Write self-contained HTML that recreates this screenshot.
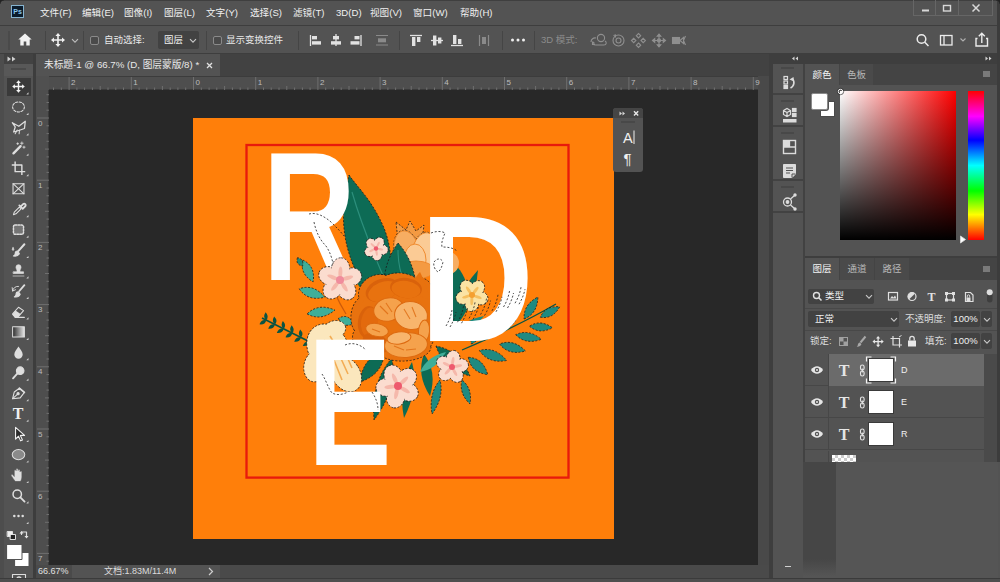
<!DOCTYPE html>
<html lang="zh-CN">
<head>
<meta charset="utf-8">
<title>Photoshop</title>
<style>
*{box-sizing:border-box;margin:0;padding:0}
html,body{width:1000px;height:582px;overflow:hidden;background:#535353}
body{position:relative;font-family:"Liberation Sans","Noto Sans CJK SC",sans-serif;font-size:10px;color:#e6e6e6}
.abs{position:absolute}
svg{overflow:visible}
.t10{font-size:9.5px;line-height:16px;white-space:nowrap;color:#e8e8e8}
.t9{font-size:9px;line-height:13px;white-space:nowrap}
#menubar{left:0;top:0;width:1000px;height:26px;background:#535353;border-bottom:1px solid #3e3e3e;border-top:1px solid #3f3f3f}
#menubar span{position:absolute;top:3.500px;line-height:16px;font-size:9.6px;color:#f0f0f0;white-space:nowrap}
#pslogo{left:11px;top:4px;width:13px;height:13px;background:#0b1c2c;border:1px solid #86b4d0;color:#8cc8f0;font-size:7px;line-height:11px;text-align:center;font-weight:bold}
#winctl{left:913px;top:-1px;width:80px;height:16px;border:1px solid #666;border-top:none}
#winctl i{position:absolute;top:0;width:1px;height:15px;background:#666}
#optbar{left:0;top:26px;width:1000px;height:28px;background:#535353;border-bottom:1px solid #3e3e3e}
.vsep{position:absolute;width:1px;background:#454545;top:31px;height:19px}
.chk{width:9px;height:9px;border:1px solid #8a8a8a;border-radius:2px;background:#4a4a4a}
.dd{background:#424242;border-radius:2px;color:#f0f0f0;font-size:9.5px;line-height:18px}
#tabbar{left:0;top:54px;width:769px;height:22px;background:#424242}
#doctab{left:36px;top:54px;width:184px;height:22px;background:#535353;color:#e8e8e8;font-size:9.7px;line-height:22px;padding-left:8px;white-space:nowrap}
#tools{left:0;top:54px;width:36px;height:528px;background:#535353;border-right:3px solid #3d3d3d;border-left:4px solid #4d4d4d}
#hruler{left:36px;top:76px;width:722px;height:14px;background:#4e4e4e;border-top:1px solid #3c3c3c;border-bottom:1px solid #3a3a3a}
#vruler{left:36px;top:90px;width:13px;height:475px;background:#4e4e4e;border-right:1px solid #3a3a3a}
#canvasbg{left:49px;top:90px;width:709px;height:475px;background:#282828}
#status{left:36px;top:565px;width:733px;height:13px;background:#4a4a4a}
#vscroll{left:758px;top:76px;width:11px;height:489px;background:#494949}
#bottomline{left:0;top:578px;width:1000px;height:4px;background:#4e4e4e;border-top:1.500px solid #3b3b3b}
#rightdock{left:769px;top:54px;width:231px;height:524px;background:#535353;border-left:4px solid #3e3e3e}
.ptab{font-size:9.5px;line-height:21px;text-align:center;color:#b8b8b8;background:#4a4a4a;white-space:nowrap}
.ptab.act{background:#535353;color:#f4f4f4}
</style>
</head>
<body>
<div id="menubar" class="abs"><div class="abs" id="pslogo">Ps</div><span id="m0" style="left:40px">文件(F)</span><span id="m1" style="left:82px">编辑(E)</span><span id="m2" style="left:124px">图像(I)</span><span id="m3" style="left:164px">图层(L)</span><span id="m4" style="left:206px">文字(Y)</span><span id="m5" style="left:250px">选择(S)</span><span id="m6" style="left:293px">滤镜(T)</span><span id="m7" style="left:336px">3D(D)</span><span id="m8" style="left:370px">视图(V)</span><span id="m9" style="left:413px">窗口(W)</span><span id="m10" style="left:460px">帮助(H)</span><div class="abs" id="winctl"><i style="left:21px"></i><i style="left:44px"></i><svg class="abs" style="left:0;top:0" width="80" height="16" viewBox="0 0 80 16"><path d="M8 10.5h7" stroke="#d8d8d8" stroke-width="2"/><rect x="29.5" y="5.5" width="7" height="5.5" fill="none" stroke="#d8d8d8" stroke-width="1.4"/><path d="M58.5 4.5l7 7m0-7l-7 7" stroke="#d8d8d8" stroke-width="1.5"/></svg></div></div><div id="optbar" class="abs"></div><div class="vsep" style="left:45px"></div><div class="vsep" style="left:83px"></div><div class="vsep" style="left:206px"></div><div class="vsep" style="left:298px"></div><div class="vsep" style="left:399px"></div><div class="vsep" style="left:502px"></div><div class="vsep" style="left:534px"></div><div class="abs" style="left:8px;top:31px;width:2px;height:19px;background:#4a4a4a"></div><svg class="abs" style="left:18px;top:33px" width="14" height="13" viewBox="0 0 14 13"><path d="M7 0.5L0.3 6.6h2v5.9h3.4V8.6h2.6v3.9h3.4V6.6h2z" fill="#f2f2f2"/></svg><svg class="abs" style="left:51px;top:33px" width="14" height="14" viewBox="0 0 14 14"><path d="M7 0l2.600 3h-1.800v3.200h3.200v-1.800l3 2.600l-3 2.600v-1.800h-3.200v3.200h1.800l-2.600 3l-2.600 -3h1.800v-3.200h-3.200v1.800l-3 -2.600l3 -2.600v1.800h3.200v-3.200h-1.800z" fill="#f0f0f0"/></svg><svg class="abs" style="left:71px;top:38px" width="8" height="6" viewBox="0 0 8 6"><path d="M1 1.200l3 3l3 -3" fill="none" stroke="#bdbdbd" stroke-width="1.100"/></svg><div class="abs chk" style="left:90px;top:36px"></div><div class="abs t10" id="o_auto" style="left:104px;top:32px">自动选择:</div><div class="abs dd" id="o_dd" style="left:158px;top:31px;width:41px;height:18px"><span style="position:absolute;left:6px;top:0">图层</span></div><svg class="abs" style="left:189px;top:38px" width="8" height="6" viewBox="0 0 8 6"><path d="M1 1.200l3 3l3 -3" fill="none" stroke="#c8c8c8" stroke-width="1.100"/></svg><div class="abs chk" style="left:213px;top:36px"></div><div class="abs t10" id="o_show" style="left:226px;top:32px">显示变换控件</div><svg class="abs" style="left:300px;top:30px" width="200" height="22" viewBox="300 30 200 22"><path d="M310.5 35v11" stroke="#e2e2e2" stroke-width="1.3"/><rect x="312" y="36" width="5" height="3.4" fill="#e2e2e2"/><rect x="312" y="41.2" width="9" height="3.4" fill="#e2e2e2"/><path d="M336 34v12" stroke="#e2e2e2" stroke-width="1.3"/><rect x="333" y="36" width="6" height="3.4" fill="#e2e2e2"/><rect x="331" y="41.2" width="10" height="3.4" fill="#e2e2e2"/><path d="M361 35v11" stroke="#e2e2e2" stroke-width="1.3"/><rect x="354.5" y="36" width="5" height="3.4" fill="#e2e2e2"/><rect x="350.5" y="41.2" width="9" height="3.4" fill="#e2e2e2"/><path d="M376 35.5h12M376 45h12" stroke="#8a8a8a" stroke-width="1.2"/><rect x="378" y="38.3" width="8" height="4" fill="#8a8a8a"/><path d="M410 35.5h12" stroke="#e2e2e2" stroke-width="1.3"/><rect x="412" y="37" width="3.4" height="9" fill="#e2e2e2"/><rect x="417" y="37" width="3.4" height="5" fill="#e2e2e2"/><path d="M431 40.5h12" stroke="#e2e2e2" stroke-width="1.3"/><rect x="433" y="35.5" width="3.4" height="10" fill="#e2e2e2"/><rect x="438" y="37.5" width="3.4" height="6" fill="#e2e2e2"/><path d="M451 45.5h12" stroke="#e2e2e2" stroke-width="1.3"/><rect x="453" y="35" width="3.4" height="9" fill="#e2e2e2"/><rect x="458" y="39" width="3.4" height="5" fill="#e2e2e2"/><path d="M479.5 35v11M488.5 35v11" stroke="#8a8a8a" stroke-width="1.2"/><rect x="482" y="37" width="4" height="7" fill="#8a8a8a"/></svg><svg class="abs" style="left:510px;top:37px" width="16" height="6" viewBox="0 0 16 6"><circle cx="2.5" cy="3" r="1.5" fill="#efefef"/><circle cx="8" cy="3" r="1.5" fill="#efefef"/><circle cx="13.5" cy="3" r="1.5" fill="#efefef"/></svg><div class="abs t10" id="o_3d" style="left:541px;top:32px;color:#8c8c8c">3D 模式:</div><svg class="abs" style="left:588px;top:30px" width="104" height="22" viewBox="588 30 104 22" fill="none" stroke="#8f8f8f" stroke-width="1.1"><circle cx="601" cy="38" r="3.6"/><path d="M591 42c0-3 2.5-4.5 5-4M605 41c2 1 1.5 4-1 4h-8c-3 0-4-1.5-3-3l1.5 1.5M592.500 41.5v3h2.500"/><circle cx="618.5" cy="40.500" r="5.500"/><circle cx="618.5" cy="40.500" r="2.500"/><path d="M613.500 35.500l2 -0.500v2.500"/><path d="M638.500 33.500l2.200 2.200l-2.200 2.200l-2.200 -2.200zM638.500 43l2.200 2.200l-2.200 2.200l-2.200 -2.200zM631.500 40.500l2.200 -2.200l2.200 2.200l-2.200 2.200zM641 40.500l2.200 -2.200l2.200 2.200l-2.200 2.200z"/><path d="M659 34l1.800 2.200h-3.600zM659 47l1.800 -2.200h-3.600zM652.500 40.500l2.200 -1.800v3.600zM665.500 40.500l-2.200 -1.800v3.600z" fill="#8f8f8f"/><path d="M659 36v9M654.500 40.500h9"/><circle cx="659" cy="40.500" r="1.600" fill="#8f8f8f"/><rect x="672.500" y="37.500" width="7" height="6" fill="#8f8f8f"/><path d="M680 40.500l3.500 -3v6zM685.500 36l-2 4.500l2 4.500"/></svg><svg class="abs" style="left:912px;top:30px" width="84" height="22" viewBox="912 30 84 22" fill="none" stroke="#ececec" stroke-width="1.5"><circle cx="921.500" cy="39" r="4.300"/><path d="M924.800 42.300l3.700 3.700"/><rect x="940.500" y="35.500" width="11.500" height="9.500" stroke-width="1.300"/><path d="M944 35.500v9.500" stroke-width="1.300"/><path d="M960.500 38.500l2.500 2.500l2.500 -2.500" stroke="#b0b0b0" stroke-width="1.100"/><path d="M977.500 38.500h-1.500v7.500h11.500v-7.500h-1.500M981.800 43v-9.500M978.800 36.300l3 -3l3 3" stroke-width="1.400"/></svg><div id="tabbar" class="abs"></div><div id="doctab" class="abs"><span id="dt_text">未标题-1 @ 66.7% (D, 图层蒙版/8) *</span><svg style="position:absolute;left:170px;top:8px" width="7" height="7" viewBox="0 0 7 7"><path d="M1 1l5 5m0 -5l-5 5" stroke="#e0e0e0" stroke-width="1.300"/></svg></div><div id="canvasbg" class="abs"></div><div id="vscroll" class="abs"></div><div id="hruler" class="abs"></div><div id="vruler" class="abs"></div><div class="abs" style="left:36px;top:76px;width:13px;height:14px;background:#505050"></div><svg class="abs" style="left:36px;top:76px" width="723" height="14" viewBox="36 76 723 14"><path d="M53.5 87.5v2.5M61.3 87.5v2.5M69.1 77v13M76.9 87.5v2.5M84.6 87.5v2.5M92.4 87.5v2.5M100.2 86v4M108.0 87.5v2.5M115.8 87.5v2.5M123.5 87.5v2.5M131.3 77v13M139.1 87.5v2.5M146.8 87.5v2.5M154.6 87.5v2.5M162.4 86v4M170.2 87.5v2.5M177.9 87.5v2.5M185.7 87.5v2.5M193.5 77v13M201.3 87.5v2.5M209.1 87.5v2.5M216.8 87.5v2.5M224.6 86v4M232.4 87.5v2.5M240.2 87.5v2.5M247.9 87.5v2.5M255.7 77v13M263.5 87.5v2.5M271.2 87.5v2.5M279.0 87.5v2.5M286.8 86v4M294.6 87.5v2.5M302.4 87.5v2.5M310.1 87.5v2.5M317.9 77v13M325.7 87.5v2.5M333.5 87.5v2.5M341.2 87.5v2.5M349.0 86v4M356.8 87.5v2.5M364.6 87.5v2.5M372.3 87.5v2.5M380.1 77v13M387.9 87.5v2.5M395.6 87.5v2.5M403.4 87.5v2.5M411.2 86v4M419.0 87.5v2.5M426.8 87.5v2.5M434.5 87.5v2.5M442.3 77v13M450.1 87.5v2.5M457.9 87.5v2.5M465.6 87.5v2.5M473.4 86v4M481.2 87.5v2.5M488.9 87.5v2.5M496.7 87.5v2.5M504.5 77v13M512.3 87.5v2.5M520.0 87.5v2.5M527.8 87.5v2.5M535.6 86v4M543.4 87.5v2.5M551.2 87.5v2.5M558.9 87.5v2.5M566.7 77v13M574.5 87.5v2.5M582.2 87.5v2.5M590.0 87.5v2.5M597.8 86v4M605.6 87.5v2.5M613.4 87.5v2.5M621.1 87.5v2.5M628.9 77v13M636.7 87.5v2.5M644.5 87.5v2.5M652.2 87.5v2.5M660.0 86v4M667.8 87.5v2.5M675.5 87.5v2.5M683.3 87.5v2.5M691.1 77v13M698.9 87.5v2.5M706.6 87.5v2.5M714.4 87.5v2.5M722.2 86v4M730.0 87.5v2.5M737.8 87.5v2.5M745.5 87.5v2.5M753.3 77v13" stroke="#6f6f6f" stroke-width="1" fill="none"/><text x="71.1" y="84.500" font-size="8" fill="#bdbdbd" font-family="Liberation Sans, sans-serif">2</text><text x="133.3" y="84.500" font-size="8" fill="#bdbdbd" font-family="Liberation Sans, sans-serif">1</text><text x="195.5" y="84.500" font-size="8" fill="#bdbdbd" font-family="Liberation Sans, sans-serif">0</text><text x="257.7" y="84.500" font-size="8" fill="#bdbdbd" font-family="Liberation Sans, sans-serif">1</text><text x="319.9" y="84.500" font-size="8" fill="#bdbdbd" font-family="Liberation Sans, sans-serif">2</text><text x="382.1" y="84.500" font-size="8" fill="#bdbdbd" font-family="Liberation Sans, sans-serif">3</text><text x="444.3" y="84.500" font-size="8" fill="#bdbdbd" font-family="Liberation Sans, sans-serif">4</text><text x="506.5" y="84.500" font-size="8" fill="#bdbdbd" font-family="Liberation Sans, sans-serif">5</text><text x="568.7" y="84.500" font-size="8" fill="#bdbdbd" font-family="Liberation Sans, sans-serif">6</text><text x="630.9" y="84.500" font-size="8" fill="#bdbdbd" font-family="Liberation Sans, sans-serif">7</text><text x="693.1" y="84.500" font-size="8" fill="#bdbdbd" font-family="Liberation Sans, sans-serif">8</text><text x="755.3" y="84.500" font-size="8" fill="#bdbdbd" font-family="Liberation Sans, sans-serif">9</text></svg><svg class="abs" style="left:36px;top:90px" width="13" height="475" viewBox="36 90 13 475"><path d="M46.5 94.7h2.5M46.5 102.5h2.5M46.5 110.2h2.5M37 118.0h12M46.5 125.8h2.5M46.5 133.6h2.5M46.5 141.3h2.5M45 149.1h4M46.5 156.9h2.5M46.5 164.7h2.5M46.5 172.4h2.5M37 180.2h12M46.5 188.0h2.5M46.5 195.8h2.5M46.5 203.5h2.5M45 211.3h4M46.5 219.1h2.5M46.5 226.9h2.5M46.5 234.6h2.5M37 242.4h12M46.5 250.2h2.5M46.5 258.0h2.5M46.5 265.7h2.5M45 273.5h4M46.5 281.3h2.5M46.5 289.1h2.5M46.5 296.8h2.5M37 304.6h12M46.5 312.4h2.5M46.5 320.1h2.5M46.5 327.9h2.5M45 335.7h4M46.5 343.5h2.5M46.5 351.2h2.5M46.5 359.0h2.5M37 366.8h12M46.5 374.6h2.5M46.5 382.4h2.5M46.5 390.1h2.5M45 397.9h4M46.5 405.7h2.5M46.5 413.4h2.5M46.5 421.2h2.5M37 429.0h12M46.5 436.8h2.5M46.5 444.6h2.5M46.5 452.3h2.5M45 460.1h4M46.5 467.9h2.5M46.5 475.7h2.5M46.5 483.4h2.5M37 491.2h12M46.5 499.0h2.5M46.5 506.8h2.5M46.5 514.5h2.5M45 522.3h4M46.5 530.1h2.5M46.5 537.9h2.5M46.5 545.6h2.5M37 553.4h12M46.5 561.2h2.5" stroke="#6f6f6f" stroke-width="1" fill="none"/><text x="38" y="125.5" font-size="8" fill="#bdbdbd" font-family="Liberation Sans, sans-serif">0</text><text x="38" y="187.7" font-size="8" fill="#bdbdbd" font-family="Liberation Sans, sans-serif">1</text><text x="38" y="249.9" font-size="8" fill="#bdbdbd" font-family="Liberation Sans, sans-serif">2</text><text x="38" y="312.1" font-size="8" fill="#bdbdbd" font-family="Liberation Sans, sans-serif">3</text><text x="38" y="374.3" font-size="8" fill="#bdbdbd" font-family="Liberation Sans, sans-serif">4</text><text x="38" y="436.5" font-size="8" fill="#bdbdbd" font-family="Liberation Sans, sans-serif">5</text><text x="38" y="498.7" font-size="8" fill="#bdbdbd" font-family="Liberation Sans, sans-serif">6</text><text x="38" y="560.9" font-size="8" fill="#bdbdbd" font-family="Liberation Sans, sans-serif">7</text></svg><div id="status" class="abs"></div><div class="abs" style="left:72px;top:565px;width:148px;height:13px;background:#535353"></div><div class="abs t9" id="st_zoom" style="left:38px;top:565px;color:#e0e0e0">66.67%</div><div class="abs t9" id="st_doc" style="left:104px;top:565px;color:#dcdcdc">文档:1.83M/11.4M</div><svg class="abs" style="left:208px;top:567px" width="6" height="9" viewBox="0 0 6 9"><path d="M1 1l3.500 3.500l-3.500 3.500" fill="none" stroke="#cfcfcf" stroke-width="1.200"/></svg><div id="tools" class="abs"><div class="abs" style="left:0;top:0;width:29px;height:10px;background:#424242"></div><svg class="abs" style="left:3px;top:2px" width="10" height="6" viewBox="0 0 10 6"><path d="M0.500 0.500l3.500 2.500l-3.500 2.500zM5 0.500l3.500 2.500l-3.500 2.500z" fill="#d0d0d0"/></svg><div class="abs" style="left:0px;top:10px;width:29px;height:12px;background:#585858"></div><div class="abs" style="left:7px;top:14px;width:15px;height:2px;background:#4a4a4a"></div><div class="abs" style="left:3px;top:23.500px;width:23.500px;height:18.500px;background:#3a3a3a"></div></div><svg class="abs" style="left:0;top:76px" width="36" height="506" viewBox="0 76 36 506" fill="none" stroke="#dedede" stroke-width="1.300" stroke-linecap="round" stroke-linejoin="round"><path d="M26.3 94.5h2.200v-2.200z" fill="#cfcfcf" stroke="none"/><path d="M26.3 115.0h2.200v-2.200z" fill="#cfcfcf" stroke="none"/><path d="M26.3 135.4h2.200v-2.200z" fill="#cfcfcf" stroke="none"/><path d="M26.3 155.8h2.200v-2.200z" fill="#cfcfcf" stroke="none"/><path d="M26.3 176.3h2.200v-2.200z" fill="#cfcfcf" stroke="none"/><path d="M26.3 217.2h2.200v-2.200z" fill="#cfcfcf" stroke="none"/><path d="M26.3 237.7h2.200v-2.200z" fill="#cfcfcf" stroke="none"/><path d="M26.3 258.1h2.200v-2.200z" fill="#cfcfcf" stroke="none"/><path d="M26.3 278.5h2.200v-2.200z" fill="#cfcfcf" stroke="none"/><path d="M26.3 299.0h2.200v-2.200z" fill="#cfcfcf" stroke="none"/><path d="M26.3 319.4h2.200v-2.200z" fill="#cfcfcf" stroke="none"/><path d="M26.3 339.9h2.200v-2.200z" fill="#cfcfcf" stroke="none"/><path d="M26.3 360.3h2.200v-2.200z" fill="#cfcfcf" stroke="none"/><path d="M26.3 380.8h2.200v-2.200z" fill="#cfcfcf" stroke="none"/><path d="M26.3 401.2h2.200v-2.200z" fill="#cfcfcf" stroke="none"/><path d="M26.3 421.7h2.200v-2.200z" fill="#cfcfcf" stroke="none"/><path d="M26.3 442.1h2.200v-2.200z" fill="#cfcfcf" stroke="none"/><path d="M26.3 462.6h2.200v-2.200z" fill="#cfcfcf" stroke="none"/><path d="M26.3 483.1h2.200v-2.200z" fill="#cfcfcf" stroke="none"/><path d="M26.3 503.5h2.200v-2.200z" fill="#cfcfcf" stroke="none"/><path d="M26.3 524.0h2.200v-2.200z" fill="#cfcfcf" stroke="none"/><g transform="translate(18.5 86.50) scale(0.84) translate(-18.5 -86.50)"><g transform="translate(11.0 79.0) scale(1.07)"><path d="M7 0l2.600 3h-1.800v3.200h3.200v-1.800l3 2.600l-3 2.600v-1.800h-3.200v3.200h1.800l-2.600 3l-2.600 -3h1.800v-3.200h-3.200v1.800l-3 -2.600l3 -2.600v1.800h3.200v-3.200h-1.800z" fill="#f4f4f4" stroke="none"/></g></g><g transform="translate(18.5 106.95) scale(0.84) translate(-18.5 -106.95)"><ellipse cx="18.5" cy="106.95" rx="7" ry="6" stroke-dasharray="2.600 1.800"/></g><g transform="translate(18.5 127.40) scale(0.84) translate(-18.5 -127.40)"><path d="M11.1 121.80000000000001L18.9 126.10000000000001L26.6 120.10000000000001L25.6 128.70000000000002L20.5 130.5L12.8 132.9L14.6 126.9Z" stroke-width="1.500"/><path d="M17.0 130.4l-2.500 4.500M19.7 130.6l-0.500 4.500" stroke-width="1.200"/></g><g transform="translate(18.5 147.85) scale(0.84) translate(-18.5 -147.85)"><path d="M12.5 154.35l8.500 -8.500" stroke-width="2.800"/><path d="M22.5 140.85v3M21.0 142.35h3M25.0 145.85v2.500M23.7 147.04999999999998h2.600M17.5 141.85v2M16.5 142.85h2" stroke-width="1"/></g><g transform="translate(18.5 168.30) scale(0.84) translate(-18.5 -168.30)"><path d="M14.5 160.3v12h12M10.5 164.3h12v12" stroke-width="1.700" stroke-linecap="butt"/></g><g transform="translate(18.5 188.75) scale(0.84) translate(-18.5 -188.75)"><rect x="12.0" y="182.75" width="13" height="12"/><path d="M12.0 182.75l13 12M25.0 182.75l-13 12"/></g><g transform="translate(18.5 209.20) scale(0.84) translate(-18.5 -209.20)"><path d="M12.5 215.7l1 -3l6 -6l2 2l-6 6z"/><path d="M19.5 204.7l3.500 3.500M21.0 206.2l3 -3a1.600 1.600 0 0 1 2.500 2.500l-3 3" stroke-width="2.200"/></g><g transform="translate(18.5 229.65) scale(0.84) translate(-18.5 -229.65)"><rect x="12.5" y="224.15" width="12" height="11" rx="2" fill="#747474" stroke-dasharray="2 1.500" stroke-width="1.800"/></g><g transform="translate(18.5 250.10) scale(0.84) translate(-18.5 -250.10)"><path d="M25.5 243.1l-7 8" stroke-width="2.400"/><path d="M17.5 251.1c-2 0 -3 2 -3 3.500c0 1 -1 2 -2 2.500c3 0.500 6 -0.500 7 -3z" fill="#dedede"/><path d="M12.0 247.1c1 1.500 1.500 2.500 0 3.500c-1.500 -1 -1 -2 0 -3.500z" fill="#dedede" stroke-width="0.800"/></g><g transform="translate(18.5 270.55) scale(0.84) translate(-18.5 -270.55)"><path d="M12.0 277.04999999999995h13M12.5 274.04999999999995h12v-2h-4c-1 -2 1 -3.500 1 -5.500a3 3 0 0 0 -6 0c0 2 2 3.500 1 5.500h-4z" fill="#dedede" stroke-width="0.800"/></g><g transform="translate(18.5 291.00) scale(0.84) translate(-18.5 -291.00)"><path d="M25.5 284.0l-6 7" stroke-width="2.200"/><path d="M18.5 292.0c-2 0 -3 2 -3 3.500c0 1 -1 2 -2 2.500c3 0.500 6 -0.500 7 -3z" fill="#dedede"/><path d="M11.5 291.0a6 6 0 0 1 7 -5.500M11.0 287.0l0.500 4l3.500 -1.500" stroke-width="1.100"/></g><g transform="translate(18.5 311.45) scale(0.84) translate(-18.5 -311.45)"><path d="M11.5 314.45l7 -8l6 4l-7 8h-3z"/><path d="M15.0 310.45l6 4l-3.500 4h-3l-3.500 -3z" fill="#dedede" stroke="none"/><path d="M17.5 318.45h8" /></g><g transform="translate(18.5 331.90) scale(0.84) translate(-18.5 -331.90)"><rect x="11.5" y="325.9" width="14" height="12" fill="url(#tg)" stroke-width="1.200"/></g><g transform="translate(18.5 352.35) scale(0.84) translate(-18.5 -352.35)"><path d="M18.5 345.34999999999997c2 3.500 5 6 5 9.500a5 5 0 0 1 -10 0c0 -3.500 3 -6 5 -9.500z" fill="#dedede" stroke="none"/></g><g transform="translate(18.5 372.80) scale(0.84) translate(-18.5 -372.80)"><circle cx="20.5" cy="370.3" r="4.500" fill="#dedede"/><path d="M17.0 373.8l-5 5.500" stroke-width="2.200"/></g><g transform="translate(18.5 393.25) scale(0.84) translate(-18.5 -393.25)"><path d="M11.5 399.75l2 -8l6 -4.500l6 5l-5 6.500z"/><path d="M11.5 399.75l6 -5.500"/><circle cx="18.0" cy="393.75" r="1.300" fill="#dedede"/><path d="M19.5 387.25l6 5" stroke-width="2"/></g><g transform="translate(18.5 413.70) scale(0.84) translate(-18.5 -413.70)"><text x="18.0" y="420.2" font-family="Liberation Serif, serif" font-weight="bold" font-size="19" fill="#f0f0f0" stroke="none" text-anchor="middle">T</text></g><g transform="translate(18.5 434.15) scale(0.84) translate(-18.5 -434.15)"><path d="M15.0 426.15v14l3.500 -3.500l2.500 5.500l2.200 -1l-2.500 -5.500h5z" fill="#2c2c2c" stroke="#f0f0f0" stroke-width="1.300"/></g><g transform="translate(18.5 454.60) scale(0.84) translate(-18.5 -454.60)"><ellipse cx="18.5" cy="454.59999999999997" rx="7.500" ry="6" fill="#8a8a8a" stroke-width="1.200"/></g><g transform="translate(18.5 475.05) scale(0.84) translate(-18.5 -475.05)"><path d="M14.5 482.55c-1.500 -2 -3 -4.500 -4.500 -6.500c-0.800 -1.200 1 -2.200 2 -1l1.500 1.800v-7c0 -1.500 2 -1.500 2.200 0v-1.500c0 -1.500 2.200 -1.500 2.300 0v1.300c0 -1.500 2.200 -1.500 2.300 0v1.500c0 -1.400 2.200 -1.400 2.200 0v6c0 2 -0.500 3.500 -1.500 5.400z" fill="#dedede" stroke="#535353" stroke-width="0.600"/></g><g transform="translate(18.5 495.50) scale(0.84) translate(-18.5 -495.50)"><circle cx="17.0" cy="494.0" r="5" stroke-width="1.800"/><path d="M20.7 497.7l5 5" stroke-width="2.200"/></g><g transform="translate(18.5 515.95) scale(0.84) translate(-18.5 -515.95)"><circle cx="13.5" cy="515.95" r="1.500" fill="#dedede" stroke="none"/><circle cx="18.5" cy="515.95" r="1.500" fill="#dedede" stroke="none"/><circle cx="23.5" cy="515.95" r="1.500" fill="#dedede" stroke="none"/></g><rect x="7.500" y="531.500" width="5" height="5" fill="#f0f0f0" stroke="#f0f0f0" stroke-width="0.800"/><rect x="10.500" y="534.500" width="5" height="5" fill="#222" stroke="#f0f0f0" stroke-width="0.900"/><path d="M21.500 534.500v-2.500h5v5" stroke-width="1.200"/><path d="M19.500 533.500l2 -2.500l2 2.500zM24.500 536l2 2.500l2 -2.500z" fill="#e6e6e6" stroke="none"/><rect x="15" y="552.500" width="14" height="14" fill="#fff" stroke="#535353" stroke-width="1"/><rect x="7" y="544.500" width="15" height="15" fill="#fff" stroke="#535353" stroke-width="1"/><rect x="12.500" y="574.500" width="13" height="8" stroke-width="1.100"/><circle cx="19" cy="579" r="2" /></svg><div id="rightdock" class="abs"></div><div class="abs" style="left:769px;top:54px;width:231px;height:10px;background:#3e3e3e"></div><svg class="abs" style="left:772px;top:54px" width="228" height="10" viewBox="772 54 228 10"><path d="M794.500 56.500l-2.500 2l2.500 2zM798 56.500l-2.500 2l2.500 2zM985.500 56.500l2.500 2l-2.500 2zM989 56.500l2.500 2l-2.500 2z" fill="#d4d4d4"/></svg><div class="abs" style="left:773px;top:64px;width:32px;height:514px;background:#424242"></div><div class="abs" style="left:773px;top:64px;width:29.500px;height:514px;background:#535353"></div><div class="abs" style="left:773px;top:64px;width:30px;height:31px;background:#535353;border-bottom:2px solid #424242"></div><div class="abs" style="left:781px;top:67px;width:13px;height:2px;background:#484848"></div><div class="abs" style="left:773px;top:96.5px;width:30px;height:30.5px;background:#535353;border-bottom:2px solid #424242"></div><div class="abs" style="left:781px;top:99.5px;width:13px;height:2px;background:#484848"></div><div class="abs" style="left:773px;top:129px;width:30px;height:52px;background:#535353;border-bottom:2px solid #424242"></div><div class="abs" style="left:781px;top:132px;width:13px;height:2px;background:#484848"></div><div class="abs" style="left:773px;top:183px;width:30px;height:30px;background:#535353;border-bottom:2px solid #424242"></div><div class="abs" style="left:781px;top:186px;width:13px;height:2px;background:#484848"></div><svg class="abs" style="left:774.500px;top:64.500px" width="30" height="160" viewBox="773 64 30 160" fill="none" stroke="#dcdcdc" stroke-width="1.200"><rect x="782" y="75.500" width="3.500" height="3"/><rect x="782" y="80" width="3.500" height="3"/><rect x="782" y="84.500" width="3.500" height="3" fill="#dcdcdc"/><path d="M788.500 87c4 -2 4.500 -7 1.500 -9.500" stroke-width="1.600"/><path d="M787.500 78.500l4 -2.500l0.500 4.500z" fill="#dcdcdc" stroke="none"/><path d="M781.500 109.500l3.500 -2l3.500 2v4l-3.500 2l-3.500 -2zM781.500 109.500l3.500 2l3.500 -2M785 111.500v4"/><rect x="790.500" y="107.500" width="3.500" height="3" fill="#dcdcdc"/><rect x="790.500" y="112.500" width="3.500" height="3" fill="#dcdcdc"/><rect x="781" y="118" width="13.500" height="3.500" fill="#dcdcdc" stroke="none"/><rect x="781.500" y="139.500" width="12" height="13" stroke-width="1.400"/><path d="M781.500 146h12M787.500 139.500v6.500" stroke-width="1.300"/><rect x="782" y="140" width="5.500" height="6" fill="#dcdcdc" stroke="none"/><path d="M781.500 163.500h12v9.500l-3.500 3.500h-8.500z" fill="#dcdcdc" stroke-width="1"/><path d="M784 167h7M784 169.500h7M784 172h4" stroke="#535353" stroke-width="1"/><path d="M790 176.500v-3.500h3.500" stroke="#535353" stroke-width="1"/><circle cx="785.500" cy="201" r="4" stroke-width="1.300"/><circle cx="785.500" cy="201" r="1.300" fill="#dcdcdc"/><path d="M788.500 198l4 -3.500M788.500 204l4 3.500" stroke-width="1.300"/><circle cx="793" cy="194" r="1.700" fill="#dcdcdc" stroke="none"/><circle cx="793" cy="208" r="1.700" fill="#dcdcdc" stroke="none"/></svg><div class="abs" style="left:785px;top:566px;width:6px;height:1px;background:#d0d0d0"></div><div class="abs" style="left:805px;top:64px;width:193px;height:21px;background:#444"></div><div class="abs ptab act" id="t_color" style="left:805px;top:64px;width:34px;height:21px">颜色</div><div class="abs ptab" id="t_sw" style="left:840px;top:64px;width:33px;height:21px">色板</div><div class="abs" style="left:983px;top:71px;width:7px;height:6px;background:#7a7a7a"></div><div class="abs" style="left:820px;top:101px;width:15px;height:16px;background:#fff;border:1px solid #4a4a4a"></div><div class="abs" style="left:811px;top:93px;width:17px;height:17px;background:#fff;border:1px solid #8a8a8a;border-radius:2px;box-shadow:0 0 0 1px #535353"></div><div class="abs" style="left:840px;top:91px;width:116px;height:149px;background:linear-gradient(to top,#000,rgba(0,0,0,0)),linear-gradient(to right,#fff,#f00)"></div><div class="abs" style="left:968px;top:91px;width:16px;height:149px;background:linear-gradient(to bottom,#f00 0%,#f0f 17%,#00f 33%,#0ff 50%,#0f0 67%,#ff0 83%,#f00 100%)"></div><svg class="abs" style="left:836px;top:88px" width="130" height="158" viewBox="836 88 130 158"><circle cx="840.500" cy="91.500" r="2.300" fill="none" stroke="#fff" stroke-width="1"/><circle cx="840.500" cy="91.500" r="3.200" fill="none" stroke="#333" stroke-width="0.700"/><path d="M960.500 236l5 3.500l-5 3.500z" fill="#fff" stroke="#ddd" stroke-width="0.800"/></svg><div class="abs" style="left:805px;top:256px;width:193px;height:2px;background:#3e3e3e"></div><div class="abs" style="left:805px;top:258px;width:193px;height:22px;background:#444"></div><div class="abs ptab act" id="t_lay" style="left:805px;top:258px;width:34px;height:22px;line-height:22px">图层</div><div class="abs ptab" id="t_ch" style="left:840px;top:258px;width:34px;height:22px;line-height:22px">通道</div><div class="abs ptab" id="t_pa" style="left:875px;top:258px;width:34px;height:22px;line-height:22px">路径</div><div class="abs" style="left:983px;top:266px;width:7px;height:6px;background:#7a7a7a"></div><div class="abs dd" style="left:808px;top:289px;width:66px;height:15px"></div><div class="abs t10" id="l_kind" style="left:825px;top:288px;color:#f0f0f0;line-height:16px">类型</div><svg class="abs" style="left:865px;top:294px" width="8" height="6" viewBox="0 0 8 6"><path d="M1 1.200l3 3l3 -3" fill="none" stroke="#c8c8c8" stroke-width="1.100"/></svg><div class="abs" style="left:805px;top:308px;width:193px;height:1px;background:#484848"></div><div class="abs" style="left:805px;top:330px;width:193px;height:1px;background:#484848"></div><div class="abs dd" style="left:808px;top:311px;width:91px;height:16px"></div><div class="abs t10" id="l_norm" style="left:815px;top:311px;color:#f0f0f0;line-height:16px">正常</div><svg class="abs" style="left:890px;top:317px" width="8" height="6" viewBox="0 0 8 6"><path d="M1 1.200l3 3l3 -3" fill="none" stroke="#c8c8c8" stroke-width="1.100"/></svg><div class="abs t10" id="l_op" style="left:905px;top:311px;color:#dcdcdc;line-height:16px">不透明度:</div><div class="abs dd t10" id="l_opv" style="left:951px;top:311px;width:29px;height:16px;line-height:16px;text-align:center;color:#f0f0f0">100%</div><div class="abs dd" style="left:981px;top:311px;width:11px;height:16px"></div><svg class="abs" style="left:982.5px;top:317px" width="8" height="6" viewBox="0 0 8 6"><path d="M1 1.200l3 3l3 -3" fill="none" stroke="#c8c8c8" stroke-width="1.100"/></svg><div class="abs t10" id="l_lock" style="left:810px;top:333px;color:#dcdcdc;line-height:16px">锁定:</div><div class="abs t10" id="l_fill" style="left:925px;top:333px;color:#dcdcdc;line-height:16px">填充:</div><div class="abs dd t10" id="l_fillv" style="left:951px;top:333px;width:29px;height:16px;line-height:16px;text-align:center;color:#f0f0f0">100%</div><div class="abs dd" style="left:981px;top:333px;width:11px;height:16px"></div><svg class="abs" style="left:982.5px;top:339px" width="8" height="6" viewBox="0 0 8 6"><path d="M1 1.200l3 3l3 -3" fill="none" stroke="#c8c8c8" stroke-width="1.100"/></svg><svg class="abs" style="left:805px;top:284px" width="193" height="70" viewBox="805 284 193 70" fill="none" stroke="#e0e0e0" stroke-width="1.200"><circle cx="816.500" cy="295.500" r="3" stroke-width="1.400"/><path d="M818.800 297.800l2.700 2.700" stroke-width="1.600"/><rect x="888.500" y="292.500" width="9" height="7.500"/><path d="M890 298.500l2 -2.500l1.500 1.500l1.500 -2l1.500 3z" fill="#e0e0e0" stroke="none"/><circle cx="912" cy="296.500" r="4"/><path d="M912 292.500a4 4 0 0 0 0 8z" fill="#e0e0e0" stroke="none" transform="rotate(45 912 296.500)"/><text x="931.500" y="301" font-family="Liberation Serif, serif" font-weight="bold" font-size="12" fill="#e0e0e0" stroke="none" text-anchor="middle">T</text><rect x="946.500" y="293.500" width="7" height="6.500"/><path d="M945 292h3v3h-3zM952 292h3v3h-3zM945 298.500h3v3h-3zM952 298.500h3v3h-3z" fill="#e0e0e0" stroke="none"/><path d="M965.500 292.500h5l2.500 2.500v6.500h-7.500z"/><rect x="966.500" y="297.500" width="4" height="3.500" fill="#e0e0e0" stroke="none"/><path d="M967.300 297.500v-1.500a1.200 1.200 0 0 1 2.400 0v1.500" stroke-width="0.900"/><rect x="987" y="290.500" width="5.500" height="12" rx="2.700" fill="#3e3e3e" stroke="none"/><circle cx="989.700" cy="292.300" r="3" fill="#dedede" stroke="none"/><rect x="839.500" y="337.500" width="8" height="8" stroke="#a0a0a0" stroke-width="1"/><path d="M839.500 337.500h4v4h-4zM843.500 341.500h4v4h-4z" fill="#a0a0a0" stroke="none"/><path d="M865.500 336.500l-5 6" stroke="#a8a8a8" stroke-width="2"/><path d="M860 342.500c-1.500 0 -2.200 1.500 -2.200 2.500c0 0.800 -0.600 1.300 -1.200 1.600c2 0.300 4.300 -0.400 4.800 -2.300z" fill="#a8a8a8" stroke="none"/><g transform="translate(872.500 336) scale(0.800)"><path d="M7 0l2.600 3h-1.800v3.200h3.200v-1.800l3 2.600l-3 2.600v-1.800h-3.200v3.200h1.800l-2.600 3l-2.600 -3h1.800v-3.200h-3.200v1.800l-3 -2.600l3 -2.600v1.800h3.200v-3.200h-1.800z" fill="#e8e8e8" stroke="none"/></g><path d="M893 336v9h9M890.500 338.500h9v9" stroke-width="1.200"/><path d="M899 337l2.500 -1.500" stroke-width="1"/><rect x="908" y="340.500" width="8" height="6" fill="#e8e8e8" stroke="none"/><path d="M909.800 340.500v-2a2.200 2.200 0 0 1 4.400 0v2" stroke-width="1.300"/></svg><div class="abs" style="left:984px;top:354px;width:14px;height:108px;background:#4a4a4a"></div><div class="abs" style="left:805px;top:354.0px;width:179px;height:32px;border-bottom:1px solid #474747"></div><div class="abs" style="left:828px;top:354.0px;width:156px;height:31.500px;background:#6b6b6b"></div><div class="abs" style="left:828px;top:354.0px;width:1px;height:32px;background:#474747"></div><div class="abs" style="left:868px;top:358.0px;width:26px;height:24px;background:#fff;border:1px solid #3a3a3a"></div><div class="abs t9" id="ln0" style="left:901px;top:364.0px;color:#f0f0f0;line-height:12px">D</div><svg class="abs" style="left:805px;top:354.0px" width="95" height="32" viewBox="805 0 95 32" fill="none" stroke="#e6e6e6"><path d="M811 16c3 -5 9 -5 12 0c-3 5 -9 5 -12 0z" fill="#e6e6e6" stroke="none"/><circle cx="817" cy="16" r="2.200" fill="#535353" stroke="none"/><circle cx="817" cy="16" r="1" fill="#e6e6e6" stroke="none"/><text x="844" y="22" font-family="Liberation Serif, serif" font-weight="bold" font-size="16" fill="#e6e6e6" stroke="none" text-anchor="middle">T</text><rect x="860.500" y="11" width="3.600" height="5" rx="1.800" stroke-width="1.100"/><rect x="860.500" y="17" width="3.600" height="5" rx="1.800" stroke-width="1.100"/><path d="M862.300 14.500v4" stroke-width="1.100"/><path d="M866.500 7.500v-4.500h5M890.500 3h5v4.500M866.500 24.500v4.500h5M890.500 29h5v-4.500" stroke="#f4f4f4" stroke-width="1.200"/></svg><div class="abs" style="left:805px;top:386.2px;width:179px;height:32px;border-bottom:1px solid #474747"></div><div class="abs" style="left:828px;top:386.2px;width:1px;height:32px;background:#474747"></div><div class="abs" style="left:868px;top:390.2px;width:26px;height:24px;background:#fff;border:1px solid #3a3a3a"></div><div class="abs t9" id="ln1" style="left:901px;top:396.2px;color:#f0f0f0;line-height:12px">E</div><svg class="abs" style="left:805px;top:386.2px" width="95" height="32" viewBox="805 0 95 32" fill="none" stroke="#e6e6e6"><path d="M811 16c3 -5 9 -5 12 0c-3 5 -9 5 -12 0z" fill="#e6e6e6" stroke="none"/><circle cx="817" cy="16" r="2.200" fill="#535353" stroke="none"/><circle cx="817" cy="16" r="1" fill="#e6e6e6" stroke="none"/><text x="844" y="22" font-family="Liberation Serif, serif" font-weight="bold" font-size="16" fill="#e6e6e6" stroke="none" text-anchor="middle">T</text><rect x="860.500" y="11" width="3.600" height="5" rx="1.800" stroke-width="1.100"/><rect x="860.500" y="17" width="3.600" height="5" rx="1.800" stroke-width="1.100"/><path d="M862.300 14.500v4" stroke-width="1.100"/></svg><div class="abs" style="left:805px;top:418.4px;width:179px;height:32px;border-bottom:1px solid #474747"></div><div class="abs" style="left:828px;top:418.4px;width:1px;height:32px;background:#474747"></div><div class="abs" style="left:868px;top:422.4px;width:26px;height:24px;background:#fff;border:1px solid #3a3a3a"></div><div class="abs t9" id="ln2" style="left:901px;top:428.4px;color:#f0f0f0;line-height:12px">R</div><svg class="abs" style="left:805px;top:418.4px" width="95" height="32" viewBox="805 0 95 32" fill="none" stroke="#e6e6e6"><path d="M811 16c3 -5 9 -5 12 0c-3 5 -9 5 -12 0z" fill="#e6e6e6" stroke="none"/><circle cx="817" cy="16" r="2.200" fill="#535353" stroke="none"/><circle cx="817" cy="16" r="1" fill="#e6e6e6" stroke="none"/><text x="844" y="22" font-family="Liberation Serif, serif" font-weight="bold" font-size="16" fill="#e6e6e6" stroke="none" text-anchor="middle">T</text><rect x="860.500" y="11" width="3.600" height="5" rx="1.800" stroke-width="1.100"/><rect x="860.500" y="17" width="3.600" height="5" rx="1.800" stroke-width="1.100"/><path d="M862.300 14.500v4" stroke-width="1.100"/></svg><div class="abs" style="left:828px;top:450.600px;width:1px;height:12px;background:#474747"></div><div class="abs" style="left:832px;top:455px;width:24px;height:7px;background:#fff;background-image:linear-gradient(45deg,#ccc 25%,transparent 25%,transparent 75%,#ccc 75%),linear-gradient(45deg,#ccc 25%,transparent 25%,transparent 75%,#ccc 75%);background-size:6px 6px;background-position:0 0,3px 3px"></div><div class="abs" style="left:803px;top:462px;width:195px;height:116px;background:#555"></div><div class="abs" style="left:803px;top:462px;width:33px;height:114px;background:linear-gradient(to bottom,#464646 0,#464646 85%,#555 100%)"></div><div class="abs" style="left:997px;top:0;width:3px;height:462px;background:#3c3c3c"></div><div class="abs" style="left:996px;top:0;width:4px;height:4px;background:radial-gradient(circle at 0 100%,rgba(0,0,0,0) 3px,#222 4px)"></div><div class="abs" style="left:0;top:0;width:4px;height:4px;background:radial-gradient(circle at 100% 100%,rgba(0,0,0,0) 3px,#222 4px)"></div><div id="bottomline" class="abs"></div><svg class="abs" id="art" style="left:193px;top:118px" width="421" height="421" viewBox="193 118 421 421">
<defs><linearGradient id="tg" x1="0" x2="1"><stop offset="0" stop-color="#2a2a2a"/><stop offset="1" stop-color="#e8e8e8"/></linearGradient></defs>
<rect x="193" y="118" width="421" height="421" fill="#ff7f0a"/>
<rect x="246.500" y="145" width="322" height="332.600" fill="none" stroke="#e81a0c" stroke-width="2.300"/>
<g><path d="M314.0 344.0L262.0 318.0" stroke="#0a5443" stroke-width="1.6" fill="none"/><path d="M309.7 341.8Q304.8 340.7 302.8 346.0Q308.4 346.7 309.7 341.8Z" fill="#0a5443" /><path d="M309.7 341.8Q312.8 337.9 308.9 333.9Q305.8 338.6 309.7 341.8Z" fill="#0a5443" /><path d="M301.0 337.5Q296.1 336.4 294.2 341.7Q299.8 342.4 301.0 337.5Z" fill="#0a5443" /><path d="M301.0 337.5Q304.2 333.6 300.2 329.5Q297.2 334.2 301.0 337.5Z" fill="#0a5443" /><path d="M292.3 333.2Q287.4 332.0 285.5 337.3Q291.1 338.0 292.3 333.2Z" fill="#0a5443" /><path d="M292.3 333.2Q295.5 329.3 291.6 325.2Q288.5 329.9 292.3 333.2Z" fill="#0a5443" /><path d="M283.7 328.8Q278.8 327.7 276.8 333.0Q282.4 333.7 283.7 328.8Z" fill="#0a5443" /><path d="M283.7 328.8Q286.8 324.9 282.9 320.9Q279.8 325.6 283.7 328.8Z" fill="#0a5443" /><path d="M275.0 324.5Q270.1 323.4 268.2 328.7Q273.8 329.4 275.0 324.5Z" fill="#0a5443" /><path d="M275.0 324.5Q278.2 320.6 274.2 316.5Q271.2 321.2 275.0 324.5Z" fill="#0a5443" /><path d="M266.3 320.2Q261.4 319.0 259.5 324.3Q265.1 325.0 266.3 320.2Z" fill="#0a5443" /><path d="M266.3 320.2Q269.5 316.3 265.6 312.2Q262.5 316.9 266.3 320.2Z" fill="#0a5443" /><path d="M326 268c4 14 10 30 20 46" stroke="#cc5a0b" stroke-width="1.2" fill="none"/><path d="M302.9 260.1Q299.4 273.7 313.1 281.9Q315.6 266.1 302.9 260.1Z" fill="#3fae98" stroke="#1c1c1c" stroke-width="0.8" stroke-dasharray="2 1.6"/><path d="M326.0 266.6Q321.7 272.4 328.0 277.4Q332.1 270.5 326.0 266.6Z" fill="#3fae98" stroke="#1c1c1c" stroke-width="0.8" stroke-dasharray="2 1.6"/><path d="M299.2 288.8Q307.8 301.6 324.8 297.2Q313.6 283.6 299.2 288.8Z" fill="#3fae98" stroke="#1c1c1c" stroke-width="0.8" stroke-dasharray="2 1.6"/><path d="M307.1 313.9Q320.9 321.6 334.9 310.1Q318.3 302.8 307.1 313.9Z" fill="#3fae98" stroke="#1c1c1c" stroke-width="0.8" stroke-dasharray="2 1.6"/><path d="M338.5 318.3Q342.4 328.6 353.5 323.7Q348.1 312.8 338.5 318.3Z" fill="#3fae98" stroke="#1c1c1c" stroke-width="0.8" stroke-dasharray="2 1.6"/><path d="M297.5 257.7Q295.2 264.2 302.5 266.3Q304.3 258.9 297.5 257.7Z" fill="#1f8a80" stroke="#1c1c1c" stroke-width="0.8" stroke-dasharray="2 1.6"/><path d="M462 350C490 338 525 322 556 304" stroke="#0a5443" stroke-width="1.3" fill="none"/><path d="M524.1 319.0Q537.5 313.6 537.9 297.0Q523.2 304.6 524.1 319.0Z" fill="#1f8a80" stroke="#1c1c1c" stroke-width="0.8" stroke-dasharray="2 1.6"/><path d="M540.3 317.2Q552.7 319.5 559.7 306.8Q545.3 305.5 540.3 317.2Z" fill="#1f8a80" stroke="#1c1c1c" stroke-width="0.8" stroke-dasharray="2 1.6"/><path d="M529.5 326.2Q539.3 334.8 552.5 327.8Q540.4 319.0 529.5 326.2Z" fill="#1f8a80" stroke="#1c1c1c" stroke-width="0.8" stroke-dasharray="2 1.6"/><path d="M515.7 334.7Q525.8 345.1 541.3 339.3Q528.7 328.5 515.7 334.7Z" fill="#1f8a80" stroke="#1c1c1c" stroke-width="0.8" stroke-dasharray="2 1.6"/><path d="M499.5 344.0Q508.9 355.8 525.5 351.0Q513.5 338.5 499.5 344.0Z" fill="#1f8a80" stroke="#1c1c1c" stroke-width="0.8" stroke-dasharray="2 1.6"/><path d="M479.4 350.5Q488.4 363.9 506.6 360.5Q494.9 346.1 479.4 350.5Z" fill="#1f8a80" stroke="#1c1c1c" stroke-width="0.8" stroke-dasharray="2 1.6"/><path d="M468.3 357.3Q470.7 372.2 487.7 374.7Q483.4 358.1 468.3 357.3Z" fill="#1f8a80" stroke="#1c1c1c" stroke-width="0.8" stroke-dasharray="2 1.6"/><path d="M506.4 328.6Q518.9 323.0 517.6 307.4Q504.0 315.1 506.4 328.6Z" fill="#1f8a80" stroke="#1c1c1c" stroke-width="0.8" stroke-dasharray="2 1.6"/><path d="M488.7 336.8Q501.0 330.8 499.3 315.2Q485.9 323.4 488.7 336.8Z" fill="#1f8a80" stroke="#1c1c1c" stroke-width="0.8" stroke-dasharray="2 1.6"/><path d="M471.5 344.0Q483.2 338.4 480.5 324.0Q467.9 331.6 471.5 344.0Z" fill="#1f8a80" stroke="#1c1c1c" stroke-width="0.8" stroke-dasharray="2 1.6"/><path d="M349 175C358 188 372 200 384 228C391 246 392 262 390 282L366 290C356 274 346 252 344 228C342 208 346 190 349 175Z" fill="#0d6b55" stroke="#1c1c1c" stroke-width="0.8" stroke-dasharray="2 1.6"/><path d="M352 192C360 220 372 250 384 278" stroke="#2c8f7c" stroke-width="1.2" fill="none"/><path d="M376.0 300.0Q373.8 279.1 352.0 268.0Q356.6 292.1 376.0 300.0Z" fill="#0d6b55" /><path d="M452 262c8 6 14 16 16 28c0 10 -6 22 -16 34z" fill="#0d6b55"/><path d="M452.0 330.0Q474.8 307.8 478.0 270.0Q452.6 298.2 452.0 330.0Z" fill="#0d6b55" /><path d="M452.0 336.0Q470.7 333.9 484.0 316.0Q462.1 320.1 452.0 336.0Z" fill="#1f8a80" /><path d="M384.0 352.0Q362.7 357.1 360.0 382.0Q383.7 373.9 384.0 352.0Z" fill="#0d6b55" stroke="#1c1c1c" stroke-width="0.8" stroke-dasharray="2 1.6"/><path d="M392.0 358.0Q370.9 382.1 374.0 420.0Q396.9 389.7 392.0 358.0Z" fill="#0d6b55" stroke="#1c1c1c" stroke-width="0.8" stroke-dasharray="2 1.6"/><path d="M412.0 362.0Q397.7 385.7 404.0 418.0Q419.1 388.7 412.0 362.0Z" fill="#0d6b55" /><path d="M424.0 354.0Q416.0 374.4 430.0 396.0Q437.4 371.4 424.0 354.0Z" fill="#0d6b55" /><path d="M436.0 346.0Q443.3 368.6 470.0 376.0Q459.3 350.4 436.0 346.0Z" fill="#0d6b55" stroke="#1c1c1c" stroke-width="0.8" stroke-dasharray="2 1.6"/><path d="M440.0 380.0Q428.5 393.4 432.0 414.0Q444.3 397.2 440.0 380.0Z" fill="#1f8a80" stroke="#1c1c1c" stroke-width="0.8" stroke-dasharray="2 1.6"/><path d="M462.0 380.0Q458.6 393.1 470.0 404.0Q472.6 388.5 462.0 380.0Z" fill="#1f8a80" stroke="#1c1c1c" stroke-width="0.8" stroke-dasharray="2 1.6"/><path d="M420.0 372.0Q436.6 369.4 446.0 352.0Q426.8 356.6 420.0 372.0Z" fill="#3fae98" /><path d="M376.0 356.0Q365.8 346.7 350.0 350.0Q362.8 359.9 376.0 356.0Z" fill="#3fae98" /><path d="M396 222l10 8l4 -9l6 10l8 -6l-2 16h-24z" fill="#f49a42" stroke="#1c1c1c" stroke-width="0.8" stroke-dasharray="2 1.6"/><ellipse cx="407.0" cy="252.0" rx="13.0" ry="22.0" transform="rotate(-12 407.0 252.0)" fill="#f7ad62" stroke="#1c1c1c" stroke-width="0.8" stroke-dasharray="2 1.6"/><ellipse cx="424.0" cy="254.0" rx="13.0" ry="22.0" transform="rotate(10 424.0 254.0)" fill="#f7ad62" stroke="#1c1c1c" stroke-width="0.8" stroke-dasharray="2 1.6"/><ellipse cx="446.0" cy="263.0" rx="13.0" ry="12.0" transform="rotate(0 446.0 263.0)" fill="#f7ad62" /><ellipse cx="407.0" cy="252.0" rx="12.5" ry="21.5" transform="rotate(-12 407.0 252.0)" fill="#f7ad62" stroke="#ee8526" stroke-width="0.9"/><ellipse cx="424.0" cy="254.0" rx="12.5" ry="21.5" transform="rotate(10 424.0 254.0)" fill="#fbcb95" stroke="#ee8526" stroke-width="0.9"/><ellipse cx="415.0" cy="260.0" rx="11.0" ry="16.0" transform="rotate(0 415.0 260.0)" fill="#fbcb95" stroke="#ee8526" stroke-width="0.9"/><ellipse cx="416.0" cy="270.0" rx="18.0" ry="9.0" transform="rotate(0 416.0 270.0)" fill="#f49a42" stroke="#ee8526" stroke-width="0.9"/><path d="M398 243C408 254 414 268 416 284L384 284C384 268 390 254 398 243Z" fill="#0d6b55" stroke="#1c1c1c" stroke-width="0.8" stroke-dasharray="2 1.6"/><path d="M398 250C398 262 400 272 404 282" stroke="#2c8f7c" stroke-width="1.1" fill="none"/><ellipse cx="378.0" cy="292.0" rx="20.0" ry="17.0" transform="rotate(-25 378.0 292.0)" fill="#e8720f" stroke="#1c1c1c" stroke-width="0.8" stroke-dasharray="2 1.6"/><ellipse cx="364.0" cy="316.0" rx="13.0" ry="20.0" transform="rotate(5 364.0 316.0)" fill="#e8720f" stroke="#1c1c1c" stroke-width="0.8" stroke-dasharray="2 1.6"/><ellipse cx="372.0" cy="340.0" rx="20.0" ry="15.0" transform="rotate(20 372.0 340.0)" fill="#e8720f" stroke="#1c1c1c" stroke-width="0.8" stroke-dasharray="2 1.6"/><ellipse cx="404.0" cy="348.0" rx="27.0" ry="13.0" transform="rotate(-3 404.0 348.0)" fill="#e8720f" stroke="#1c1c1c" stroke-width="0.8" stroke-dasharray="2 1.6"/><ellipse cx="424.0" cy="330.0" rx="12.0" ry="22.0" transform="rotate(8 424.0 330.0)" fill="#e8720f" stroke="#1c1c1c" stroke-width="0.8" stroke-dasharray="2 1.6"/><ellipse cx="422.0" cy="300.0" rx="14.0" ry="22.0" transform="rotate(-5 422.0 300.0)" fill="#e8720f" stroke="#1c1c1c" stroke-width="0.8" stroke-dasharray="2 1.6"/><ellipse cx="400.0" cy="287.0" rx="22.0" ry="14.0" transform="rotate(5 400.0 287.0)" fill="#e8720f" stroke="#1c1c1c" stroke-width="0.8" stroke-dasharray="2 1.6"/><ellipse cx="392.0" cy="318.0" rx="34.0" ry="34.0" transform="rotate(0 392.0 318.0)" fill="#e8720f" stroke="#1c1c1c" stroke-width="0.8" stroke-dasharray="2 1.6"/><ellipse cx="378.0" cy="292.0" rx="19.2" ry="16.2" transform="rotate(-25 378.0 292.0)" fill="#e8720f" /><ellipse cx="364.0" cy="316.0" rx="12.2" ry="19.2" transform="rotate(5 364.0 316.0)" fill="#e8720f" /><ellipse cx="372.0" cy="340.0" rx="19.2" ry="14.2" transform="rotate(20 372.0 340.0)" fill="#e8720f" /><ellipse cx="404.0" cy="348.0" rx="26.2" ry="12.2" transform="rotate(-3 404.0 348.0)" fill="#e8720f" /><ellipse cx="424.0" cy="330.0" rx="11.2" ry="21.2" transform="rotate(8 424.0 330.0)" fill="#e8720f" /><ellipse cx="422.0" cy="300.0" rx="13.2" ry="21.2" transform="rotate(-5 422.0 300.0)" fill="#e8720f" /><ellipse cx="400.0" cy="287.0" rx="21.2" ry="13.2" transform="rotate(5 400.0 287.0)" fill="#e8720f" /><ellipse cx="392.0" cy="318.0" rx="33.2" ry="33.2" transform="rotate(0 392.0 318.0)" fill="#e8720f" /><path d="M410 292C412 282 416 276 420 272C424 280 428 290 430 300Z" fill="#e8720f"/><ellipse cx="382.0" cy="290.0" rx="17.0" ry="11.0" transform="rotate(-22 382.0 290.0)" fill="#d9620b" /><ellipse cx="383.0" cy="291.5" rx="15.5" ry="9.5" transform="rotate(-22 383.0 291.5)" fill="#e8720f" /><ellipse cx="406.0" cy="288.0" rx="16.0" ry="10.0" transform="rotate(8 406.0 288.0)" fill="#d9620b" /><ellipse cx="406.0" cy="289.5" rx="14.5" ry="8.5" transform="rotate(8 406.0 289.5)" fill="#e8720f" /><ellipse cx="368.0" cy="322.0" rx="10.0" ry="16.0" transform="rotate(8 368.0 322.0)" fill="#d9620b" /><ellipse cx="369.5" cy="322.0" rx="8.5" ry="14.5" transform="rotate(8 369.5 322.0)" fill="#e36a0d" /><ellipse cx="376.0" cy="343.0" rx="14.0" ry="9.0" transform="rotate(25 376.0 343.0)" fill="#d9620b" /><ellipse cx="388.5" cy="309.5" rx="15.0" ry="11.5" transform="rotate(-15 388.5 309.5)" fill="#f5a24c" stroke="#dd6a10" stroke-width="1"/><ellipse cx="411.0" cy="315.5" rx="16.5" ry="14.0" transform="rotate(10 411.0 315.5)" fill="#f8b56c" stroke="#dd6a10" stroke-width="1"/><ellipse cx="377.0" cy="330.0" rx="11.5" ry="6.5" transform="rotate(12 377.0 330.0)" fill="#f5a24c" stroke="#dd6a10" stroke-width="1"/><ellipse cx="424.0" cy="331.0" rx="5.5" ry="11.0" transform="rotate(5 424.0 331.0)" fill="#f5a24c" stroke="#dd6a10" stroke-width="1"/><ellipse cx="406.0" cy="345.0" rx="21.5" ry="12.5" transform="rotate(-4 406.0 345.0)" fill="#f5a24c" stroke="#dd6a10" stroke-width="1"/><ellipse cx="399.0" cy="338.0" rx="12.0" ry="6.0" transform="rotate(-8 399.0 338.0)" fill="#f8b56c" stroke="#dd6a10" stroke-width="1"/><path d="M380 306l8 8M386 303l6 9M404 309l6 10M412 307l4 10M394 346l10 4M406 350l10 -1M372 329l8 3" stroke="#dd6a10" stroke-width="1.1" fill="none" opacity="0.8"/><ellipse cx="479.8" cy="297.8" rx="8.4" ry="6.9" transform="rotate(20 479.8 297.8)" fill="#fbe3a4" stroke="#1c1c1c" stroke-width="0.8" stroke-dasharray="2 1.6"/><ellipse cx="471.7" cy="303.2" rx="8.4" ry="6.9" transform="rotate(92 471.7 303.2)" fill="#fbe3a4" stroke="#1c1c1c" stroke-width="0.8" stroke-dasharray="2 1.6"/><ellipse cx="464.1" cy="297.3" rx="8.4" ry="6.9" transform="rotate(164 464.1 297.3)" fill="#fbe3a4" stroke="#1c1c1c" stroke-width="0.8" stroke-dasharray="2 1.6"/><ellipse cx="467.4" cy="288.2" rx="8.4" ry="6.9" transform="rotate(236 467.4 288.2)" fill="#fbe3a4" stroke="#1c1c1c" stroke-width="0.8" stroke-dasharray="2 1.6"/><ellipse cx="477.1" cy="288.5" rx="8.4" ry="6.9" transform="rotate(308 477.1 288.5)" fill="#fbe3a4" stroke="#1c1c1c" stroke-width="0.8" stroke-dasharray="2 1.6"/><ellipse cx="479.0" cy="297.6" rx="7.5" ry="6.0" transform="rotate(20 479.0 297.6)" fill="#fbe3a4" /><ellipse cx="471.7" cy="302.5" rx="7.5" ry="6.0" transform="rotate(92 471.7 302.5)" fill="#fbe3a4" /><ellipse cx="464.8" cy="297.1" rx="7.5" ry="6.0" transform="rotate(164 464.8 297.1)" fill="#fbe3a4" /><ellipse cx="467.8" cy="288.8" rx="7.5" ry="6.0" transform="rotate(236 467.8 288.8)" fill="#fbe3a4" /><ellipse cx="476.6" cy="289.1" rx="7.5" ry="6.0" transform="rotate(308 476.6 289.1)" fill="#fbe3a4" /><ellipse cx="477.4" cy="296.9" rx="4.5" ry="1.5" transform="rotate(20 477.4 296.9)" fill="#f6c060" /><ellipse cx="471.8" cy="300.7" rx="4.5" ry="1.5" transform="rotate(92 471.8 300.7)" fill="#f6c060" /><ellipse cx="466.5" cy="296.6" rx="4.5" ry="1.5" transform="rotate(164 466.5 296.6)" fill="#f6c060" /><ellipse cx="468.8" cy="290.3" rx="4.5" ry="1.5" transform="rotate(236 468.8 290.3)" fill="#f6c060" /><ellipse cx="475.5" cy="290.5" rx="4.5" ry="1.5" transform="rotate(308 475.5 290.5)" fill="#f6c060" /><circle cx="472" cy="295" r="3.0" fill="#f5a030"/><ellipse cx="328.0" cy="348.0" rx="20.0" ry="25.0" transform="rotate(-28 328.0 348.0)" fill="#fbe7bd" stroke="#1c1c1c" stroke-width="0.8" stroke-dasharray="2 1.6"/><ellipse cx="346.0" cy="374.0" rx="14.0" ry="19.0" transform="rotate(-32 346.0 374.0)" fill="#fbe7bd" stroke="#1c1c1c" stroke-width="0.8" stroke-dasharray="2 1.6"/><ellipse cx="316.0" cy="366.0" rx="12.0" ry="16.0" transform="rotate(12 316.0 366.0)" fill="#fbe7bd" stroke="#1c1c1c" stroke-width="0.8" stroke-dasharray="2 1.6"/><ellipse cx="334.0" cy="330.0" rx="12.0" ry="9.0" transform="rotate(-20 334.0 330.0)" fill="#fbe7bd" stroke="#1c1c1c" stroke-width="0.8" stroke-dasharray="2 1.6"/><ellipse cx="328.0" cy="348.0" rx="19.2" ry="24.2" transform="rotate(-28 328.0 348.0)" fill="#fbe7bd" /><ellipse cx="346.0" cy="374.0" rx="13.2" ry="18.2" transform="rotate(-32 346.0 374.0)" fill="#fbe7bd" /><ellipse cx="316.0" cy="366.0" rx="11.2" ry="15.2" transform="rotate(12 316.0 366.0)" fill="#fbe7bd" /><ellipse cx="334.0" cy="330.0" rx="11.2" ry="8.2" transform="rotate(-20 334.0 330.0)" fill="#fbe7bd" /><path d="M338 352l10 22M344 350l8 18M334 360l8 20M330 336l6 10M324 340l5 10" stroke="#f3ad55" stroke-width="1.6" fill="none"/><ellipse cx="382.0" cy="249.6" rx="6.2" ry="5.1" transform="rotate(10 382.0 249.6)" fill="#fbdccf" stroke="#1c1c1c" stroke-width="0.8" stroke-dasharray="2 1.6"/><ellipse cx="376.8" cy="254.5" rx="6.2" ry="5.1" transform="rotate(82 376.8 254.5)" fill="#fbdccf" stroke="#1c1c1c" stroke-width="0.8" stroke-dasharray="2 1.6"/><ellipse cx="370.6" cy="251.2" rx="6.2" ry="5.1" transform="rotate(154 370.6 251.2)" fill="#fbdccf" stroke="#1c1c1c" stroke-width="0.8" stroke-dasharray="2 1.6"/><ellipse cx="371.8" cy="244.1" rx="6.2" ry="5.1" transform="rotate(226 371.8 244.1)" fill="#fbdccf" stroke="#1c1c1c" stroke-width="0.8" stroke-dasharray="2 1.6"/><ellipse cx="378.8" cy="243.2" rx="6.2" ry="5.1" transform="rotate(298 378.8 243.2)" fill="#fbdccf" stroke="#1c1c1c" stroke-width="0.8" stroke-dasharray="2 1.6"/><ellipse cx="381.4" cy="249.5" rx="5.5" ry="4.4" transform="rotate(10 381.4 249.5)" fill="#fbdccf" /><ellipse cx="376.8" cy="253.9" rx="5.5" ry="4.4" transform="rotate(82 376.8 253.9)" fill="#fbdccf" /><ellipse cx="371.1" cy="250.9" rx="5.5" ry="4.4" transform="rotate(154 371.1 250.9)" fill="#fbdccf" /><ellipse cx="372.2" cy="244.5" rx="5.5" ry="4.4" transform="rotate(226 372.2 244.5)" fill="#fbdccf" /><ellipse cx="378.6" cy="243.6" rx="5.5" ry="4.4" transform="rotate(298 378.6 243.6)" fill="#fbdccf" /><ellipse cx="380.1" cy="249.2" rx="3.3" ry="1.1" transform="rotate(10 380.1 249.2)" fill="#f5b8ab" /><ellipse cx="376.6" cy="252.6" rx="3.3" ry="1.1" transform="rotate(82 376.6 252.6)" fill="#f5b8ab" /><ellipse cx="372.2" cy="250.3" rx="3.3" ry="1.1" transform="rotate(154 372.2 250.3)" fill="#f5b8ab" /><ellipse cx="373.1" cy="245.5" rx="3.3" ry="1.1" transform="rotate(226 373.1 245.5)" fill="#f5b8ab" /><ellipse cx="378.0" cy="244.8" rx="3.3" ry="1.1" transform="rotate(298 378.0 244.8)" fill="#f5b8ab" /><circle cx="376" cy="248.5" r="2.2" fill="#ee5a6e"/><ellipse cx="460.1" cy="365.6" rx="8.4" ry="6.9" transform="rotate(-10 460.1 365.6)" fill="#fbdccf" stroke="#1c1c1c" stroke-width="0.8" stroke-dasharray="2 1.6"/><ellipse cx="455.9" cy="374.3" rx="8.4" ry="6.9" transform="rotate(62 455.9 374.3)" fill="#fbdccf" stroke="#1c1c1c" stroke-width="0.8" stroke-dasharray="2 1.6"/><ellipse cx="446.3" cy="372.9" rx="8.4" ry="6.9" transform="rotate(134 446.3 372.9)" fill="#fbdccf" stroke="#1c1c1c" stroke-width="0.8" stroke-dasharray="2 1.6"/><ellipse cx="444.6" cy="363.4" rx="8.4" ry="6.9" transform="rotate(206 444.6 363.4)" fill="#fbdccf" stroke="#1c1c1c" stroke-width="0.8" stroke-dasharray="2 1.6"/><ellipse cx="453.1" cy="358.8" rx="8.4" ry="6.9" transform="rotate(278 453.1 358.8)" fill="#fbdccf" stroke="#1c1c1c" stroke-width="0.8" stroke-dasharray="2 1.6"/><ellipse cx="459.4" cy="365.7" rx="7.5" ry="6.0" transform="rotate(-10 459.4 365.7)" fill="#fbdccf" /><ellipse cx="455.5" cy="373.6" rx="7.5" ry="6.0" transform="rotate(62 455.5 373.6)" fill="#fbdccf" /><ellipse cx="446.8" cy="372.4" rx="7.5" ry="6.0" transform="rotate(134 446.8 372.4)" fill="#fbdccf" /><ellipse cx="445.3" cy="363.7" rx="7.5" ry="6.0" transform="rotate(206 445.3 363.7)" fill="#fbdccf" /><ellipse cx="453.0" cy="359.6" rx="7.5" ry="6.0" transform="rotate(278 453.0 359.6)" fill="#fbdccf" /><ellipse cx="457.6" cy="366.0" rx="4.5" ry="1.5" transform="rotate(-10 457.6 366.0)" fill="#f5b8ab" /><ellipse cx="454.7" cy="372.0" rx="4.5" ry="1.5" transform="rotate(62 454.7 372.0)" fill="#f5b8ab" /><ellipse cx="448.0" cy="371.1" rx="4.5" ry="1.5" transform="rotate(134 448.0 371.1)" fill="#f5b8ab" /><ellipse cx="446.9" cy="364.5" rx="4.5" ry="1.5" transform="rotate(206 446.9 364.5)" fill="#f5b8ab" /><ellipse cx="452.8" cy="361.4" rx="4.5" ry="1.5" transform="rotate(278 452.8 361.4)" fill="#f5b8ab" /><circle cx="452" cy="367" r="3.0" fill="#ee5a6e"/><ellipse cx="407.5" cy="391.5" rx="11.2" ry="9.2" transform="rotate(30 407.5 391.5)" fill="#fbdccf" stroke="#1c1c1c" stroke-width="0.8" stroke-dasharray="2 1.6"/><ellipse cx="395.7" cy="396.8" rx="11.2" ry="9.2" transform="rotate(102 395.7 396.8)" fill="#fbdccf" stroke="#1c1c1c" stroke-width="0.8" stroke-dasharray="2 1.6"/><ellipse cx="387.1" cy="387.1" rx="11.2" ry="9.2" transform="rotate(174 387.1 387.1)" fill="#fbdccf" stroke="#1c1c1c" stroke-width="0.8" stroke-dasharray="2 1.6"/><ellipse cx="393.5" cy="376.0" rx="11.2" ry="9.2" transform="rotate(246 393.5 376.0)" fill="#fbdccf" stroke="#1c1c1c" stroke-width="0.8" stroke-dasharray="2 1.6"/><ellipse cx="406.2" cy="378.6" rx="11.2" ry="9.2" transform="rotate(318 406.2 378.6)" fill="#fbdccf" stroke="#1c1c1c" stroke-width="0.8" stroke-dasharray="2 1.6"/><ellipse cx="406.7" cy="391.0" rx="10.0" ry="8.0" transform="rotate(30 406.7 391.0)" fill="#fbdccf" /><ellipse cx="395.9" cy="395.8" rx="10.0" ry="8.0" transform="rotate(102 395.9 395.8)" fill="#fbdccf" /><ellipse cx="388.1" cy="387.0" rx="10.0" ry="8.0" transform="rotate(174 388.1 387.0)" fill="#fbdccf" /><ellipse cx="393.9" cy="376.9" rx="10.0" ry="8.0" transform="rotate(246 393.9 376.9)" fill="#fbdccf" /><ellipse cx="405.4" cy="379.3" rx="10.0" ry="8.0" transform="rotate(318 405.4 379.3)" fill="#fbdccf" /><ellipse cx="404.6" cy="389.8" rx="6.0" ry="2.0" transform="rotate(30 404.6 389.8)" fill="#f5b8ab" /><ellipse cx="396.4" cy="393.4" rx="6.0" ry="2.0" transform="rotate(102 396.4 393.4)" fill="#f5b8ab" /><ellipse cx="390.4" cy="386.8" rx="6.0" ry="2.0" transform="rotate(174 390.4 386.8)" fill="#f5b8ab" /><ellipse cx="394.9" cy="379.1" rx="6.0" ry="2.0" transform="rotate(246 394.9 379.1)" fill="#f5b8ab" /><ellipse cx="403.6" cy="380.9" rx="6.0" ry="2.0" transform="rotate(318 403.6 380.9)" fill="#f5b8ab" /><circle cx="398" cy="386" r="4.0" fill="#ee5a6e"/></g>
<g fill="#fff" font-family="Liberation Sans, sans-serif" font-weight="bold">
<text x="0" y="0" font-size="184" transform="translate(262.8 280) scale(0.70 1)">R</text>
<text x="0" y="0" font-size="180.5" transform="translate(419.5 341) scale(0.88 1)">D</text>
<text x="0" y="0" font-size="181.4" transform="translate(308 464.6) scale(0.69 1)">E</text>

</g>
<g><ellipse cx="350.6" cy="277.2" rx="11.2" ry="9.2" transform="rotate(-15 350.6 277.2)" fill="#fbdccf" stroke="#1c1c1c" stroke-width="0.8" stroke-dasharray="2 1.6"/><ellipse cx="346.0" cy="289.2" rx="11.2" ry="9.2" transform="rotate(57 346.0 289.2)" fill="#fbdccf" stroke="#1c1c1c" stroke-width="0.8" stroke-dasharray="2 1.6"/><ellipse cx="333.1" cy="288.5" rx="11.2" ry="9.2" transform="rotate(129 333.1 288.5)" fill="#fbdccf" stroke="#1c1c1c" stroke-width="0.8" stroke-dasharray="2 1.6"/><ellipse cx="329.7" cy="276.1" rx="11.2" ry="9.2" transform="rotate(201 329.7 276.1)" fill="#fbdccf" stroke="#1c1c1c" stroke-width="0.8" stroke-dasharray="2 1.6"/><ellipse cx="340.6" cy="269.0" rx="11.2" ry="9.2" transform="rotate(273 340.6 269.0)" fill="#fbdccf" stroke="#1c1c1c" stroke-width="0.8" stroke-dasharray="2 1.6"/><ellipse cx="349.7" cy="277.4" rx="10.0" ry="8.0" transform="rotate(-15 349.7 277.4)" fill="#fbdccf" /><ellipse cx="345.4" cy="288.4" rx="10.0" ry="8.0" transform="rotate(57 345.4 288.4)" fill="#fbdccf" /><ellipse cx="333.7" cy="287.8" rx="10.0" ry="8.0" transform="rotate(129 333.7 287.8)" fill="#fbdccf" /><ellipse cx="330.7" cy="276.4" rx="10.0" ry="8.0" transform="rotate(201 330.7 276.4)" fill="#fbdccf" /><ellipse cx="340.5" cy="270.0" rx="10.0" ry="8.0" transform="rotate(273 340.5 270.0)" fill="#fbdccf" /><ellipse cx="347.3" cy="278.0" rx="6.0" ry="2.0" transform="rotate(-15 347.3 278.0)" fill="#f5b8ab" /><ellipse cx="344.1" cy="286.4" rx="6.0" ry="2.0" transform="rotate(57 344.1 286.4)" fill="#f5b8ab" /><ellipse cx="335.2" cy="285.9" rx="6.0" ry="2.0" transform="rotate(129 335.2 285.9)" fill="#f5b8ab" /><ellipse cx="332.9" cy="277.3" rx="6.0" ry="2.0" transform="rotate(201 332.9 277.3)" fill="#f5b8ab" /><ellipse cx="340.4" cy="272.4" rx="6.0" ry="2.0" transform="rotate(273 340.4 272.4)" fill="#f5b8ab" /><circle cx="340" cy="280" r="4.0" fill="#f08c9c"/><path d="M309 214C316 212 324 216 331 222C337 228 341 232 344 236" fill="none" stroke="#222" stroke-width="0.8" stroke-dasharray="2 1.8"/><path d="M314 222C316 232 320 240 326 246C330 252 332 258 333 264" fill="none" stroke="#222" stroke-width="0.8" stroke-dasharray="2 1.8"/><path d="M431 233C436 231 442 231 445 233C443 238 441 243 442 247C448 247 454 248 457 251" fill="none" stroke="#222" stroke-width="0.8" stroke-dasharray="2 1.8"/><path d="M434 262c3 -4 7 -4 9 0c-1 4 -2 8 -5 10c-3 -2 -5 -6 -4 -10z" fill="none" stroke="#222" stroke-width="0.8" stroke-dasharray="2 1.8"/><path d="M446.0 326.0c3 -5 5 -10 6 -16" fill="none" stroke="#222" stroke-width="0.8" stroke-dasharray="2 1.8"/><path d="M450.0 327.0c3 -5 5 -10 6 -15" fill="none" stroke="#222" stroke-width="0.8" stroke-dasharray="2 1.8"/><path d="M457.5 322.2c3 -5 5 -10 6 -16" fill="none" stroke="#222" stroke-width="0.8" stroke-dasharray="2 1.8"/><path d="M461.5 323.2c3 -5 5 -10 6 -15" fill="none" stroke="#222" stroke-width="0.8" stroke-dasharray="2 1.8"/><path d="M469.0 318.4c3 -5 5 -10 6 -16" fill="none" stroke="#222" stroke-width="0.8" stroke-dasharray="2 1.8"/><path d="M473.0 319.4c3 -5 5 -10 6 -15" fill="none" stroke="#222" stroke-width="0.8" stroke-dasharray="2 1.8"/><path d="M480.5 314.6c3 -5 5 -10 6 -16" fill="none" stroke="#222" stroke-width="0.8" stroke-dasharray="2 1.8"/><path d="M484.5 315.6c3 -5 5 -10 6 -15" fill="none" stroke="#222" stroke-width="0.8" stroke-dasharray="2 1.8"/><path d="M492.0 310.8c3 -5 5 -10 6 -16" fill="none" stroke="#222" stroke-width="0.8" stroke-dasharray="2 1.8"/><path d="M496.0 311.8c3 -5 5 -10 6 -15" fill="none" stroke="#222" stroke-width="0.8" stroke-dasharray="2 1.8"/><path d="M503.5 307.0c3 -5 5 -10 6 -16" fill="none" stroke="#222" stroke-width="0.8" stroke-dasharray="2 1.8"/><path d="M507.5 308.0c3 -5 5 -10 6 -15" fill="none" stroke="#222" stroke-width="0.8" stroke-dasharray="2 1.8"/><path d="M515.0 303.2c3 -5 5 -10 6 -16" fill="none" stroke="#222" stroke-width="0.8" stroke-dasharray="2 1.8"/><path d="M519.0 304.2c3 -5 5 -10 6 -15" fill="none" stroke="#222" stroke-width="0.8" stroke-dasharray="2 1.8"/><path d="M322 374C326 380 328 388 332 393C338 396 344 394 348 392" fill="none" stroke="#222" stroke-width="0.8" stroke-dasharray="2 1.8"/><path d="M372 392C376 398 378 404 378 410" fill="none" stroke="#222" stroke-width="0.8" stroke-dasharray="2 1.8"/><path d="M345 345C352 342 360 344 366 350" fill="none" stroke="#222" stroke-width="0.8" stroke-dasharray="2 1.8"/></g>
</svg><div class="abs" style="left:613px;top:108px;width:30px;height:64px;background:#535353;border-radius:3px;overflow:hidden"><div style="height:10px;background:#454545"></div><div style="margin:3px auto 0;width:14px;height:2px;background:#484848"></div></div><svg class="abs" style="left:613px;top:108px" width="30" height="64" viewBox="613 108 30 64"><path d="M619.500 111.500l2.500 2l-2.500 2zM622.500 111.500l2.500 2l-2.500 2z" fill="#d8d8d8"/><path d="M634 111.300l4.200 4.200m0 -4.200l-4.200 4.200" stroke="#e8e8e8" stroke-width="1.400"/><text x="623" y="142.500" font-size="14.500" fill="#f0f0f0" font-family="Liberation Sans, sans-serif">A</text><path d="M634 130.500v13.500" stroke="#f0f0f0" stroke-width="1"/><text x="623.500" y="164" font-size="15" fill="#f0f0f0" font-family="Liberation Sans, sans-serif">¶</text></svg></body>
</html>
